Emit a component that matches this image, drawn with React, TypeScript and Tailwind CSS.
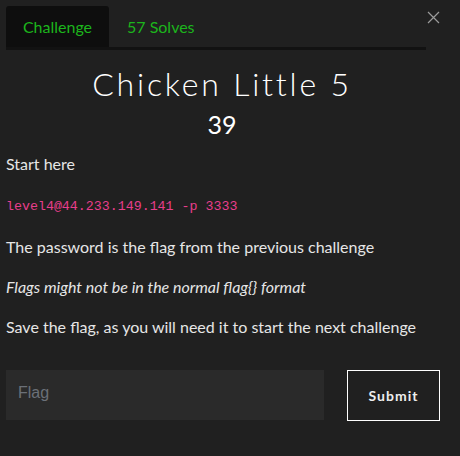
import React from "react";

export default function App() {
  return (
    <div className="min-h-[456px] w-[460px] bg-[#202020] text-[#e6e6e6] relative" style={{ fontFamily: "Lato, 'Noto Sans', sans-serif" }}>
      <button className="absolute left-[427px] top-[11px] w-[13px] h-[13px] text-[#9a9a9a]" aria-label="close">
        <svg width="13" height="13" viewBox="0 0 13 13" fill="none" stroke="currentColor" strokeWidth="1.2">
          <path d="M1 1 L12 12 M12 1 L1 12" />
        </svg>
      </button>
      <div className="pl-[6px] pt-[6px] pr-[22px]">
        <div className="flex w-[420px] border-b-[3px] border-[#121212]">
          <div className="w-[103px] h-[41px] bg-[#0e0e0e] rounded-t-[3px] flex items-center justify-center text-[16px] text-[#1cb51c]">
            Challenge
          </div>
          <div className="h-[41px] px-[18px] flex items-center text-[16px] text-[#1cb51c]">57 Solves</div>
        </div>
      </div>
      <div className="px-[6px] w-[444px]">
        <h1 className="text-center text-[32px] font-light leading-none mt-[18px] tracking-[2.8px] text-white" style={{ fontFamily: "Lato, sans-serif" }}>
          Chicken Little 5
        </h1>
        <div className="text-center text-[25px] font-normal leading-none mt-[12px] text-white">39</div>
        <div className="mt-[15px] text-[16px] leading-[24px]">
          <p className="mb-[16px]">Start here</p>
          <p className="mb-[16px]">
            <code className="text-[13.3px] text-[#e83e8c]" style={{ fontFamily: "'Liberation Mono', monospace" }}>
              level4@44.233.149.141 -p 3333
            </code>
          </p>
          <p className="mb-[16px]">The password is the flag from the previous challenge</p>
          <p className="mb-[16px] italic">Flags might not be in the normal flag{"{}"} format</p>
          <p className="mb-[16px]">Save the flag, as you will need it to start the next challenge</p>
        </div>
      </div>
      <div className="flex pl-[6px] mt-[31px] items-start">
        <input
          placeholder="Flag"
          className="w-[318px] h-[50px] bg-[#2a2a2a] px-[12px] pb-[4px] text-[16px] text-white placeholder:text-[#6b7078] outline-none"
          style={{ fontFamily: "'Liberation Sans', Arial, sans-serif" }}
        />
        <button className="ml-[23px] w-[93px] h-[51px] border border-white text-[14px] font-bold tracking-[1px] text-[#eeeeee]">
          Submit
        </button>
      </div>
    </div>
  );
}
